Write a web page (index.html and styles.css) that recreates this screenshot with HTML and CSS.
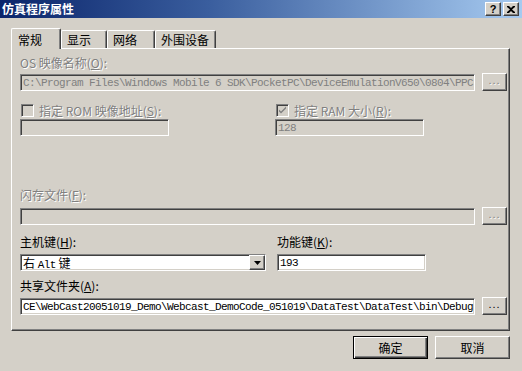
FILE: index.html
```html
<!DOCTYPE html>
<html>
<head>
  <title>仿真程序属性</title>
  <link rel="stylesheet" href="styles.css">
</head>
<body>
  <div class="titlebar">
    <span class="title">仿真程序属性</span>
    <div class="caption-buttons">
      <span class="cap-btn">?</span>
      <span class="cap-btn cap-close">
        <svg width="8" height="7" viewBox="0 0 8 7"><path d="M0 0h2l2 2 2-2h2v1L5 3.5 8 6v1H6L4 5 2 7H0V6l3-2.5L0 1z" fill="#000"/></svg>
      </span>
    </div>
  </div>

  <div class="content">
    <div class="tabs">
      <div class="tab active" style="width:50px">常规</div>
      <div class="tab" style="width:46px">显示</div>
      <div class="tab" style="width:48px">网络</div>
      <div class="tab" style="width:61px">外围设备</div>
    </div>

    <div class="panel">
      <div class="label disabled">OS 映像名称(<u>O</u>):</div>
      <div class="line gap-4">
        <div class="field readonly mono wide">C:\Program Files\Windows Mobile 6 SDK\PocketPC\DeviceEmulationV650\0804\PPC</div>
        <div class="browse raised disabled-dots">...</div>
      </div>

      <div class="line gap-13">
        <div class="col-left">
          <div class="check-row disabled">
            <span class="checkbox"></span>
            <span>指定 ROM 映像地址(<u>S</u>):</span>
          </div>
        </div>
        <div class="check-row disabled">
          <span class="checkbox">
            <svg width="9" height="9" viewBox="0 0 9 9"><path d="M1 3.5l2 2 5-5v2l-5 5-2-2z" fill="#808080"/></svg>
          </span>
          <span>指定 RAM 大小(<u>R</u>):</span>
        </div>
      </div>

      <div class="line gap-2">
        <div class="col-left">
          <div class="field readonly short"></div>
        </div>
        <div class="field readonly short mono">128</div>
      </div>

      <div class="label disabled gap-53">闪存文件(<u>F</u>):</div>
      <div class="line gap-6">
        <div class="field readonly wide"></div>
        <div class="browse raised disabled-dots">...</div>
      </div>

      <div class="line gap-11">
        <div class="col-left2 label">主机键(<u>H</u>):</div>
        <div class="label">功能键(<u>K</u>):</div>
      </div>
      <div class="line gap-6">
        <div class="col-left2">
          <div class="field combo">
            <span class="combo-text">右 <span class="mono">Alt</span> 键</span>
            <span class="combo-arrow raised">
              <svg width="7" height="4" viewBox="0 0 7 4"><path d="M0 0h7L3.5 4z" fill="#000"/></svg>
            </span>
          </div>
        </div>
        <div class="field short mono">193</div>
      </div>

      <div class="label gap-9">共享文件夹(<u>A</u>):</div>
      <div class="line gap-5">
        <div class="field wide mono">CE\WebCast20051019_Demo\Webcast_DemoCode_051019\DataTest\DataTest\bin\Debug</div>
        <div class="browse raised">...</div>
      </div>
    </div>

    <div class="actions">
      <div class="btn raised default">确定</div>
      <div class="btn raised">取消</div>
    </div>
  </div>
</body>
</html>
```

FILE: styles.css
```css
body {
  margin: 0;
  width: 522px;
  height: 371px;
  overflow: hidden;
  background-color: #d4d0c8;
  font-family: "Noto Sans CJK SC", sans-serif;
  font-size: 12px;
  color: #000;
}

.titlebar {
  height: 18px;
  display: flex;
  align-items: center;
  justify-content: space-between;
  padding: 0 3px 0 2px;
  background: linear-gradient(to right, #0a246a, #3a5e9e 40%, #a6caf0);
}

.title {
  color: #fff;
  font-weight: bold;
  font-size: 12px;
  line-height: 14px;
}

.caption-buttons {
  display: flex;
  gap: 2px;
}

.cap-btn {
  width: 16px;
  height: 14px;
  box-sizing: border-box;
  display: flex;
  align-items: center;
  justify-content: center;
  background-color: #d4d0c8;
  border: 1px solid;
  border-color: #fff #404040 #404040 #fff;
  box-shadow: inset -1px -1px #808080;
  font-family: "Liberation Sans", sans-serif;
  font-weight: bold;
  font-size: 11px;
  line-height: 12px;
}

.content {
  padding: 10px 12px 0 11px;
}

.tabs {
  display: flex;
  height: 20px;
}

.tab {
  height: 18px;
  margin-top: 2px;
  box-sizing: border-box;
  border-top: 1px solid #fff;
  border-left: 1px solid #fff;
  border-right: 1px solid #404040;
  box-shadow: inset -1px 0 #808080;
  border-radius: 2px 2px 0 0;
  padding-left: 5px;
  line-height: 17px;
}

.tab.active {
  height: 21px;
  margin-top: 0;
  padding-left: 6px;
  line-height: 21px;
  position: relative;
  z-index: 1;
  background-color: #d4d0c8;
}

.panel {
  height: 283px;
  box-sizing: border-box;
  border: 1px solid;
  border-color: #fff #404040 #404040 #fff;
  box-shadow: inset -1px -1px #808080;
  padding: 8px 2px 0 8px;
}

.label {
  height: 12px;
  line-height: 12px;
}

.disabled {
  color: #808080;
  text-shadow: 1px 1px #fff;
}

.line {
  display: flex;
  align-items: center;
}

.gap-2 { margin-top: 2px; }
.gap-4 { margin-top: 4px; }
.gap-5 { margin-top: 5px; }
.gap-6 { margin-top: 6px; }
.gap-9 { margin-top: 9px; }
.gap-11 { margin-top: 11px; }
.gap-13 { margin-top: 13px; }
.gap-53 { margin-top: 53px; }

.col-left {
  width: 255px;
}

.col-left2 {
  width: 257px;
}

.field {
  height: 17px;
  box-sizing: border-box;
  border: 1px solid;
  border-color: #808080 #fff #fff #808080;
  box-shadow: inset 1px 1px #404040, inset -1px -1px #d4d0c8;
  background-color: #fff;
  padding: 0 2px 0 2px;
  line-height: 15px;
  white-space: nowrap;
  overflow: hidden;
}

.field.readonly {
  background-color: #d4d0c8;
  color: #808080;
}

.wide {
  width: 455px;
}

.short {
  width: 149px;
}

.mono {
  font-family: "Liberation Mono", monospace;
  font-size: 11px;
  letter-spacing: -0.6px;
}

.field.mono {
  line-height: 16px;
}

.raised {
  box-sizing: border-box;
  background-color: #d4d0c8;
  border: 1px solid;
  border-color: #fff #404040 #404040 #fff;
  box-shadow: inset -1px -1px #808080;
}

.browse {
  width: 25px;
  height: 18px;
  margin-left: 7px;
  text-align: center;
  font-family: "Liberation Sans", sans-serif;
  font-size: 11px;
  line-height: 12px;
  letter-spacing: 1px;
}

.disabled-dots {
  color: #808080;
  text-shadow: 1px 1px #fff;
}

.check-row {
  display: flex;
  align-items: center;
  gap: 5px;
  height: 13px;
  padding-left: 1px;
}

.checkbox {
  width: 13px;
  height: 13px;
  box-sizing: border-box;
  border: 1px solid;
  border-color: #808080 #fff #fff #808080;
  box-shadow: inset 1px 1px #404040, inset -1px -1px #d4d0c8;
  display: flex;
  align-items: center;
  justify-content: center;
}

.combo {
  width: 246px;
  display: flex;
  justify-content: space-between;
  padding-right: 0;
}

.combo-text {
  line-height: 15px;
}

.combo-arrow {
  width: 16px;
  height: 15px;
  display: flex;
  align-items: center;
  justify-content: center;
}

.actions {
  display: flex;
  justify-content: flex-end;
  gap: 7px;
  margin-top: 5px;
}

.btn {
  width: 75px;
  height: 23px;
  text-align: center;
  line-height: 21px;
}

.btn.default {
  border: 1px solid #000;
  box-shadow: inset 1px 1px #fff, inset -1px -1px #404040, inset -2px -2px #808080;
}
```
